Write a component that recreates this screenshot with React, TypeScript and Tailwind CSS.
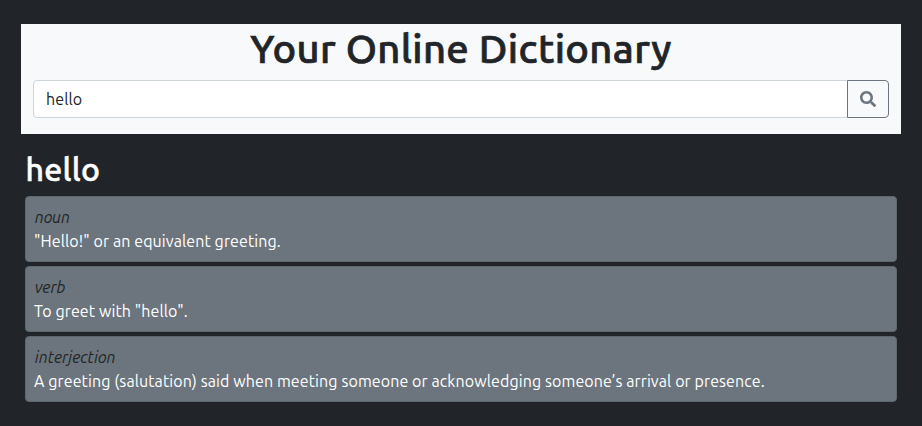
import { useState } from "react";
import { FaSearch } from "react-icons/fa";

const meanings = [
  { part: "noun", text: '"Hello!" or an equivalent greeting.' },
  { part: "verb", text: 'To greet with "hello".' },
  {
    part: "interjection",
    text: "A greeting (salutation) said when meeting someone or acknowledging someone’s arrival or presence.",
  },
];

export default function App() {
  const [word, setWord] = useState("hello");
  return (
    <div className="min-h-screen bg-[#212529] px-[21px] pt-6 font-['Ubuntu','Noto_Sans',sans-serif] text-base leading-6 tracking-[0.1px] text-[#212529]">
      <header className="h-[110px] bg-[#f8f9fa] px-3">
        <h1 className="mb-2 h-12 pt-px text-center text-[40px] leading-[48px] font-medium tracking-[0.35px] whitespace-nowrap [-webkit-text-stroke:0.7px_#212529]">
          Your Online Dictionary
        </h1>
        <div className="flex h-[38px]">
          <input
            className="min-w-0 flex-1 rounded-l-[4px] border border-[#ced4da] bg-white px-3 tracking-[0.1px] outline-none"
            value={word}
            onChange={(e) => setWord(e.target.value)}
          />
          <button aria-label="Search" className="-ml-px flex w-[42px] items-center justify-center rounded-r-[4px] border border-[#6c757d] text-[#6c757d]">
            <FaSearch size={16} />
          </button>
        </div>
      </header>
      <main className="px-1 pt-4">
        <h2 className="mb-2 h-[38px] pl-[0.5px] text-[32px] leading-[38px] font-medium tracking-[0.3px] text-white [-webkit-text-stroke:0.5px_#ffffff]">hello</h2>
        <div className="flex flex-col gap-1">
          {meanings.map((m) => (
            <section key={m.part} className="h-[66px] rounded-[4px] border border-[#5f676e] bg-[#6c757d] p-2 whitespace-nowrap">
              <p className="pl-[0.7px] tracking-[0.02px] italic">{m.part}</p>
              <p className="text-white">{m.text}</p>
            </section>
          ))}
        </div>
      </main>
    </div>
  );
}
